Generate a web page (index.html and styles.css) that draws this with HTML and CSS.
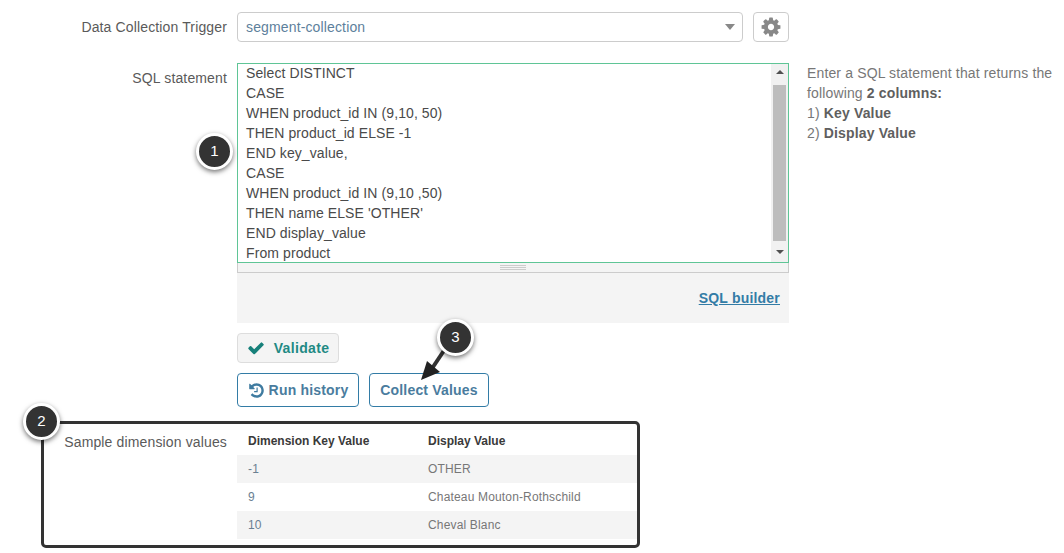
FILE: index.html
```html
<!DOCTYPE html>
<html lang="en">
  <head>
    <meta charset="UTF-8" />
    <title>Dimension values</title>
    <link rel="stylesheet" href="styles.css">
  </head>
  <body>
    <div class="page">
      <div class="row row-trigger">
        <label class="label">Data Collection Trigger</label>
        <div class="select">
          <span>segment-collection</span>
          <span class="caret"></span>
        </div>
        <button class="gear-btn">
          <svg class="gear" viewBox="0 0 1792 1792"><path d="M1152 896q0-106-75-181t-181-75-181 75-75 181 75 181 181 75 181-75 75-181zm512-109v222q0 12-8 23t-20 13l-185 28q-19 54-39 91 35 50 107 138 10 12 10 25t-9 23q-27 37-99 108t-94 71q-12 0-26-9l-138-108q-44 23-91 38-16 136-29 186-7 28-36 28h-222q-14 0-24.5-8.5t-11.5-21.5l-28-184q-49-16-90-37l-141 107q-10 9-25 9-14 0-25-11-126-114-165-168-7-10-7-23 0-12 8-23 15-21 51-66.5t54-70.5q-27-50-41-99l-183-27q-13-2-21-12.5t-8-23.5v-222q0-12 8-23t19-13l186-28q14-46 39-92-40-57-107-138-10-12-10-24 0-10 9-23 26-36 98.5-107.5t94.5-71.5q13 0 26 10l138 107q44-23 91-38 16-136 29-186 7-28 36-28h222q14 0 24.5 8.5t11.5 21.5l28 184q49 16 90 37l142-107q9-9 24-9 13 0 25 10 129 119 165 170 7 8 7 22 0 12-8 23-15 21-51 66.5t-54 70.5q26 50 41 98l183 28q13 2 21 12.5t8 23.5z"/></svg>
        </button>
      </div>

      <div class="row row-sql">
        <label class="label label-sql">SQL statement</label>
        <div class="sql-col">
          <div class="editor">
            <div class="code">
              <div>Select DISTINCT</div>
              <div>CASE</div>
              <div>WHEN product_id IN (9,10, 50)</div>
              <div>THEN product_id ELSE -1</div>
              <div>END key_value,</div>
              <div>CASE</div>
              <div>WHEN product_id IN (9,10 ,50)</div>
              <div>THEN name ELSE 'OTHER'</div>
              <div>END display_value</div>
              <div>From product</div>
            </div>
            <div class="scrollbar">
              <span class="arrow-up"></span>
              <span class="thumb"></span>
              <span class="arrow-down"></span>
            </div>
          </div>
          <div class="resize"><span class="grip"></span></div>
          <div class="builder"><a href="#">SQL builder</a></div>
          <div class="btn-row">
            <button class="btn btn-validate">
              <svg class="check" viewBox="0 0 1792 1792"><path d="M1671 566q0 40-28 68l-724 724-136 136q-28 28-68 28t-68-28l-136-136-362-362q-28-28-28-68t28-68l136-136q28-28 68-28t68 28l294 295 656-657q28-28 68-28t68 28l136 136q28 28 28 68z"/></svg>
              <span>Validate</span>
            </button>
          </div>
          <div class="btn-row">
            <button class="btn btn-outline btn-history">
              <svg class="history" viewBox="0 0 1792 1792"><path d="M1664 896q0 156-61 298t-164 245-245 164-298 61q-172 0-327-72.5t-264-204.5q-7-10-6.5-22.5t8.5-20.5l137-138q10-9 25-9 16 2 23 12 73 95 179 147t225 52q104 0 198.5-40.5t163.5-109.5 109.5-163.5 40.5-198.5-40.5-198.5-109.5-163.5-163.5-109.5-198.5-40.5q-98 0-188 35.5t-160 101.5l137 138q31 30 14 69-17 40-59 40h-448q-26 0-45-19t-19-45v-448q0-42 40-59 39-17 69 14l130 129q107-101 244.5-156.5t284.5-55.5q156 0 298 61t245 164 164 245 61 298zm-640-288v448q0 14-9 23t-23 9h-320q-14 0-23-9t-9-23v-64q0-14 9-23t23-9h224v-352q0-14 9-23t23-9h64q14 0 23 9t9 23z"/></svg>
              <span>Run history</span>
            </button>
            <button class="btn btn-outline btn-collect">Collect Values</button>
          </div>
        </div>
        <div class="help">
          <div>Enter a SQL statement that returns the</div>
          <div>following <b>2 columns:</b></div>
          <div>1) <b>Key Value</b></div>
          <div>2) <b>Display Value</b></div>
        </div>
      </div>

      <div class="sample">
        <label class="label label-sample">Sample dimension values</label>
        <table class="values">
          <thead>
            <tr><th class="col-key">Dimension Key Value</th><th>Display Value</th></tr>
          </thead>
          <tbody>
            <tr><td class="num">-1</td><td>OTHER</td></tr>
            <tr><td class="num">9</td><td>Chateau Mouton-Rothschild</td></tr>
            <tr><td class="num">10</td><td>Cheval Blanc</td></tr>
          </tbody>
        </table>
      </div>
    </div>

    <!-- annotation callouts -->
    <div class="badge badge-1">1</div>
    <div class="badge badge-2">2</div>
    <svg class="pointer" viewBox="0 0 60 60"><path d="M25 8 L11 29" stroke="#333" stroke-width="4" fill="none"/><path d="M1 39 L7 20 L20 31 Z" fill="#222"/></svg>
    <div class="badge badge-3">3</div>
  </body>
</html>
```

FILE: styles.css
```css
* {
  margin: 0;
  padding: 0;
  box-sizing: border-box;
}

body {
  font-family: "Liberation Sans", Arial, sans-serif;
  font-size: 14px;
  line-height: 20px;
  letter-spacing: 0.14px;
  color: #5a5a5a;
  background: #fff;
  overflow: hidden;
}

.page {
  padding-top: 12px;
}

.row {
  display: flex;
}

.label {
  width: 227px;
  margin-right: 10px;
  text-align: right;
  flex-shrink: 0;
}

.row-trigger {
  height: 30px;
  align-items: center;
}

.select {
  width: 506px;
  height: 30px;
  border: 1px solid #ccc;
  border-radius: 4px;
  padding: 4px 7px 4px 8px;
  color: #5d7f9c;
  display: flex;
  justify-content: space-between;
  align-items: center;
}

.caret {
  width: 0;
  height: 0;
  border-left: 5.5px solid transparent;
  border-right: 5.5px solid transparent;
  border-top: 6px solid #888;
}

.gear-btn {
  width: 36px;
  height: 30px;
  margin-left: 10px;
  background: #fff;
  border: 1px solid #ccc;
  border-radius: 4px;
  display: flex;
  align-items: center;
  justify-content: center;
}

.gear {
  width: 22px;
  height: 22px;
  fill: #888;
}

.row-sql {
  margin-top: 21px;
}

.label-sql {
  padding-top: 5px;
}

.sql-col {
  width: 552px;
  flex-shrink: 0;
}

.editor {
  height: 200px;
  border: 1px solid #5fc596;
  display: flex;
  overflow: hidden;
}

.code {
  flex: 1;
  margin-top: -1px;
  padding-left: 8px;
  color: #4a4a4a;
  letter-spacing: 0.09px;
}

.scrollbar {
  width: 17px;
  background: #f1f1f1;
  display: flex;
  flex-direction: column;
  align-items: center;
}

.arrow-up {
  width: 0;
  height: 0;
  margin-top: 6px;
  border-left: 4px solid transparent;
  border-right: 4px solid transparent;
  border-bottom: 4px solid #505050;
}

.thumb {
  width: 13px;
  height: 156px;
  margin-top: 11px;
  background: #bdbdbd;
}

.arrow-down {
  width: 0;
  height: 0;
  margin-top: 9px;
  border-left: 4px solid transparent;
  border-right: 4px solid transparent;
  border-top: 4px solid #505050;
}

.resize {
  height: 10px;
  background: #f4f4f4;
  border: 1px solid #ccc;
  border-top: 0;
  display: flex;
  justify-content: center;
  align-items: center;
}

.grip {
  width: 26px;
  height: 5px;
  border-top: 1px solid #ccc;
  border-bottom: 1px solid #ccc;
  background: linear-gradient(#ccc, #ccc) center / 100% 1px no-repeat;
}

.builder {
  height: 50px;
  background: #f4f4f4;
  display: flex;
  justify-content: flex-end;
  align-items: center;
  padding-right: 9px;
}

.builder a {
  color: #337ca6;
  font-weight: bold;
  letter-spacing: 0.2px;
}

.btn-row {
  display: flex;
  gap: 10px;
  margin-top: 10px;
}

.btn {
  font-family: inherit;
  font-size: 14px;
  font-weight: bold;
  letter-spacing: 0.35px;
  border-radius: 4px;
  display: flex;
  align-items: center;
  justify-content: center;
}

.btn-validate {
  width: 102px;
  height: 30px;
  background: #f4f4f4;
  border: 1px solid #ddd;
  color: #1f8a84;
  gap: 9px;
}

.check {
  width: 18px;
  height: 18px;
  fill: #17807a;
}

.btn-outline {
  height: 34px;
  background: #fff;
  border: 1px solid #337ca6;
  color: #4a7c9e;
  letter-spacing: 0.18px;
}

.btn-history {
  width: 122px;
  gap: 4px;
}

.history {
  width: 17px;
  height: 17px;
  fill: #3f7ba0;
}

.btn-collect {
  width: 120px;
}

.help {
  width: 260px;
  margin-left: 18px;
  color: #777;
}

.help b {
  color: #5f5f5f;
  letter-spacing: 0.15px;
}

.sample {
  position: absolute;
  left: 41px;
  top: 421px;
  width: 599px;
  height: 127px;
  border: 3px solid #333;
  border-radius: 5px;
  display: flex;
}

.label-sample {
  width: 183px;
  margin-right: 10px;
  padding-top: 8px;
}

.values {
  width: 400px;
  height: 112px;
  margin-top: 3px;
  border-collapse: collapse;
  font-size: 12px;
  line-height: 17px;
  text-align: left;
  color: #777;
  letter-spacing: 0.16px;
}

.values th {
  height: 28px;
  padding-left: 11px;
  color: #3a3a3a;
  font-weight: bold;
  letter-spacing: 0;
}

.values td {
  height: 28px;
  padding-left: 11px;
}

.col-key {
  width: 180px;
}

.values tbody tr:nth-child(odd) {
  background: #f4f4f4;
}

.values .num {
  color: #6a7f92;
}

/* callouts sit on top of the form */
.badge {
  position: absolute;
  width: 37px;
  height: 37px;
  border-radius: 50%;
  background: #333;
  border: 3px solid #fff;
  color: #fff;
  font-size: 15px;
  line-height: 30px;
  text-align: center;
  box-shadow: 0 2px 5px rgba(0, 0, 0, 0.55);
}

.badge-1 {
  left: 196px;
  top: 133px;
}

.badge-2 {
  left: 23px;
  top: 403px;
}

.badge-3 {
  left: 437px;
  top: 319px;
}

.pointer {
  position: absolute;
  left: 420px;
  top: 341px;
  width: 60px;
  height: 60px;
}
```
